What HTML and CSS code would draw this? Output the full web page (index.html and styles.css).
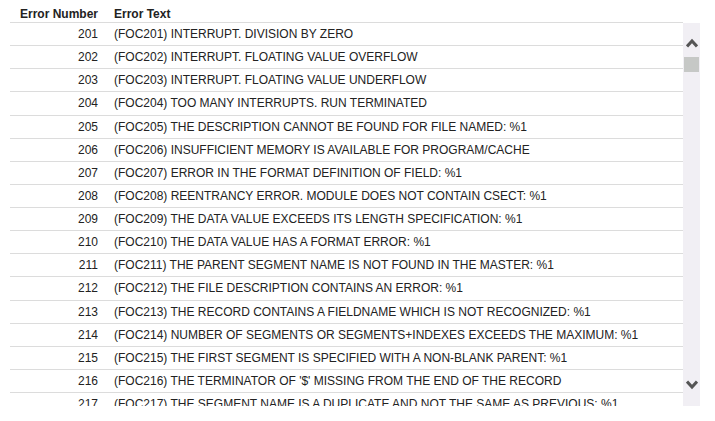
FILE: index.html
```html
<!DOCTYPE html>
<html>
<head>
<meta charset="utf-8">
<link rel="stylesheet" href="styles.css">
</head>
<body>
<div class="wrap">
  <div class="row head">
    <div class="num">Error Number</div>
    <div class="txt">Error Text</div>
  </div>
  <div class="body">
    <div class="rows">
      <div class="row"><div class="num">201</div><div class="txt">(FOC201) INTERRUPT. DIVISION BY ZERO</div></div>
      <div class="row"><div class="num">202</div><div class="txt">(FOC202) INTERRUPT. FLOATING VALUE OVERFLOW</div></div>
      <div class="row"><div class="num">203</div><div class="txt">(FOC203) INTERRUPT. FLOATING VALUE UNDERFLOW</div></div>
      <div class="row"><div class="num">204</div><div class="txt">(FOC204) TOO MANY INTERRUPTS. RUN TERMINATED</div></div>
      <div class="row"><div class="num">205</div><div class="txt">(FOC205) THE DESCRIPTION CANNOT BE FOUND FOR FILE NAMED: %1</div></div>
      <div class="row"><div class="num">206</div><div class="txt">(FOC206) INSUFFICIENT MEMORY IS AVAILABLE FOR PROGRAM/CACHE</div></div>
      <div class="row"><div class="num">207</div><div class="txt">(FOC207) ERROR IN THE FORMAT DEFINITION OF FIELD: %1</div></div>
      <div class="row"><div class="num">208</div><div class="txt">(FOC208) REENTRANCY ERROR. MODULE DOES NOT CONTAIN CSECT: %1</div></div>
      <div class="row"><div class="num">209</div><div class="txt">(FOC209) THE DATA VALUE EXCEEDS ITS LENGTH SPECIFICATION: %1</div></div>
      <div class="row"><div class="num">210</div><div class="txt">(FOC210) THE DATA VALUE HAS A FORMAT ERROR: %1</div></div>
      <div class="row"><div class="num">211</div><div class="txt">(FOC211) THE PARENT SEGMENT NAME IS NOT FOUND IN THE MASTER: %1</div></div>
      <div class="row"><div class="num">212</div><div class="txt">(FOC212) THE FILE DESCRIPTION CONTAINS AN ERROR: %1</div></div>
      <div class="row"><div class="num">213</div><div class="txt">(FOC213) THE RECORD CONTAINS A FIELDNAME WHICH IS NOT RECOGNIZED: %1</div></div>
      <div class="row"><div class="num">214</div><div class="txt">(FOC214) NUMBER OF SEGMENTS OR SEGMENTS+INDEXES EXCEEDS THE MAXIMUM: %1</div></div>
      <div class="row"><div class="num">215</div><div class="txt">(FOC215) THE FIRST SEGMENT IS SPECIFIED WITH A NON-BLANK PARENT: %1</div></div>
      <div class="row"><div class="num">216</div><div class="txt">(FOC216) THE TERMINATOR OF '$' MISSING FROM THE END OF THE RECORD</div></div>
      <div class="row"><div class="num">217</div><div class="txt">(FOC217) THE SEGMENT NAME IS A DUPLICATE AND NOT THE SAME AS PREVIOUS: %1</div></div>
    </div>
    <div class="scrollbar">
      <svg class="arrow" width="12" height="10" viewBox="0 0 12 10"><polyline points="1,8.5 6,3 11,8.5" fill="none" stroke="#555" stroke-width="3"/></svg>
      <div class="thumb"></div>
      <svg class="arrow down" width="12" height="10" viewBox="0 0 12 10"><polyline points="1,1.5 6,7 11,1.5" fill="none" stroke="#555" stroke-width="3"/></svg>
    </div>
  </div>
</div>
</body>
</html>
```

FILE: styles.css
```css
html, body {
  margin: 0;
  padding: 0;
  background: #fff;
}
body {
  font-family: "Liberation Sans", Arial, sans-serif;
  font-size: 12px;
  color: #222;
}
.wrap {
  margin-left: 10px;
}
.row {
  display: flex;
  align-items: center;
  width: 673px;
  height: 23.125px;
  box-sizing: border-box;
  border-bottom: 1px solid #dcdcdc;
  white-space: nowrap;
}
.row.head {
  height: 23px;
  font-weight: bold;
  padding-top: 6px;
}
.num {
  width: 88px;
  text-align: right;
  flex: none;
}
.txt {
  padding-left: 16px;
}
.body {
  display: flex;
}
.rows {
  width: 673px;
  height: 383px;
  overflow: hidden;
}
.scrollbar {
  width: 17px;
  height: 383px;
  background: #f1eff4;
  display: flex;
  flex-direction: column;
  align-items: center;
  padding-top: 15px;
  padding-bottom: 16px;
  box-sizing: border-box;
}
.thumb {
  width: 15px;
  height: 15px;
  background: #c6c8c6;
  margin-top: 9px;
}
.arrow.down {
  margin-top: auto;
}
```
